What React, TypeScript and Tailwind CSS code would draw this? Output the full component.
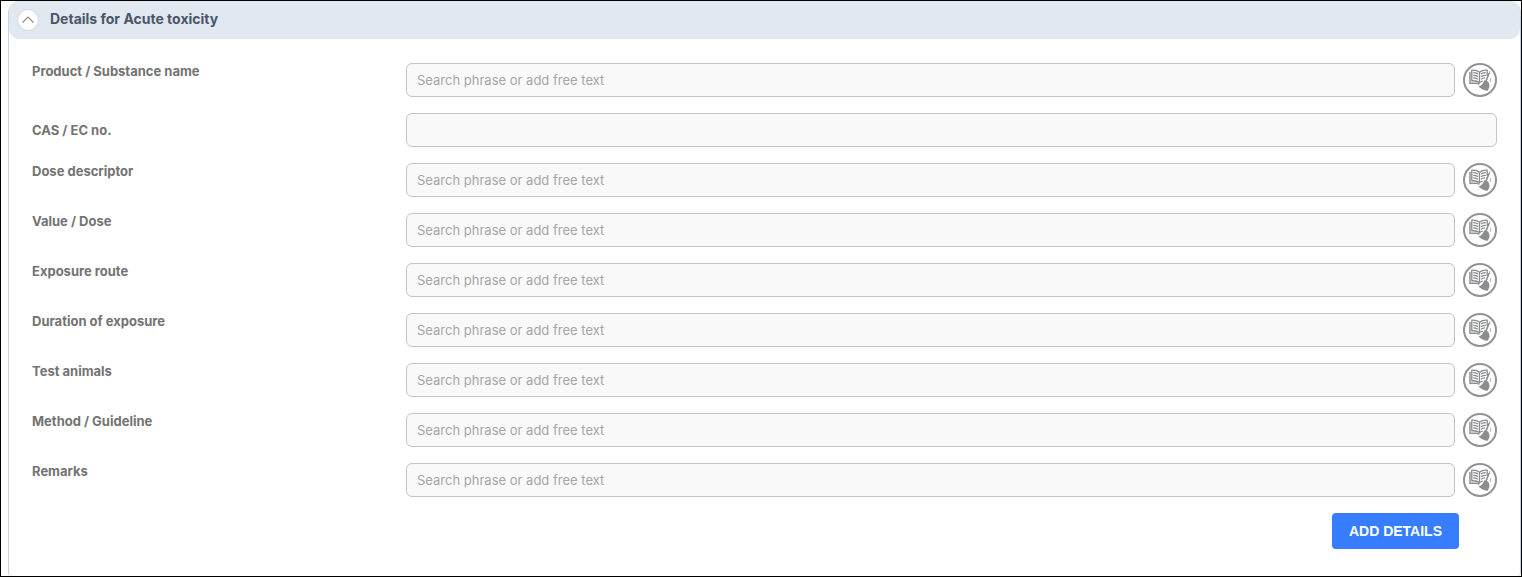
import { useState } from 'react';

type Field = { id: string; label: string; phrase: boolean };

const FIELDS: Field[] = [
  { id: 'product', label: 'Product / Substance name', phrase: true },
  { id: 'cas', label: 'CAS / EC no.', phrase: false },
  { id: 'descriptor', label: 'Dose descriptor', phrase: true },
  { id: 'value', label: 'Value / Dose', phrase: true },
  { id: 'route', label: 'Exposure route', phrase: true },
  { id: 'duration', label: 'Duration of exposure', phrase: true },
  { id: 'animals', label: 'Test animals', phrase: true },
  { id: 'method', label: 'Method / Guideline', phrase: true },
  { id: 'remarks', label: 'Remarks', phrase: true },
];

const INPUT =
  'h-[34px] min-w-0 flex-1 rounded-md border border-[#c4c4c4] bg-[#f9f9f9] px-2.5 text-[13px] text-[#555555] placeholder:text-[#a6a6a6] outline-none focus:border-[#377dff]';

function PhraseBookIcon() {
  return (
    <svg viewBox="0 0 34 34" className="size-[34px]" fill="none" aria-hidden="true">
      <circle cx="17" cy="17" r="16" fill="#ffffff" stroke="#929292" strokeWidth="2" />
      <path d="M7 9v11.2h6.200c1.500 0 2.500.4 3.300 1.200" stroke="#8b929a" strokeWidth="1.500" />
      <path
        d="M16.500 9.300C14.500 7.600 11.800 7 8.800 7.200v10.600c3-.2 5.700.3 7.700 1.800 1-.8 2-1.200 3.200-1.500"
        stroke="#8b8b8b"
        strokeWidth="1.300"
        strokeLinejoin="round"
      />
      <path d="M16.500 9.300c2-1.700 4.600-2.300 7.700-2.100v6M16.500 9.300v10.300" stroke="#8b8b8b" strokeWidth="1.300" strokeLinejoin="round" />
      <path
        d="M10.200 9.700c1.700 0 3.400.5 4.800 1.300M10.200 12.300c1.700 0 3.400.5 4.800 1.300M10.200 14.900c1.700 0 3.400.5 4.800 1.300"
        stroke="#858b91"
        strokeWidth="1.300"
      />
      <path
        d="M18 11c1.400-.8 3-1.300 4.800-1.300M18 13.600c1.400-.8 3-1.300 4.800-1.300M18 16.200c1.400-.8 2.600-1.200 4-1.300"
        stroke="#858b91"
        strokeWidth="1.300"
      />
      <path d="M26.500 8.200l.4 2.400M27.500 15v4" stroke="#a5c1dc" strokeWidth="1.200" />
      <path d="M26 10.500l-3.200 8" stroke="#8b8b8b" strokeWidth="1.600" strokeLinecap="round" />
      <path
        d="M21.300 17.200l3.800 1.200c.9 1.700 1.500 3.500 1.400 5.300l-1.700 4.100c-3.400-.2-6.800-1.700-9.300-4.300 2.700-.8 4.700-2.800 5.800-6.300z"
        fill="#8d8d8d"
      />
    </svg>
  );
}

function FieldRow({ field }: { field: Field }) {
  return (
    <div className="grid grid-cols-[374px_minmax(0,1fr)]">
      <label
        htmlFor={field.id}
        className={
          field.phrase
            ? 'self-start text-[13px] leading-4 font-bold text-[#737373]'
            : 'self-center text-[13px] leading-4 font-bold text-[#737373]'
        }
      >
        {field.label}
      </label>
      <div className="flex gap-2">
        <input
          id={field.id}
          type="text"
          className={INPUT}
          placeholder={field.phrase ? 'Search phrase or add free text' : undefined}
        />
        {field.phrase && (
          <button type="button" aria-label={`Phrases: ${field.label}`} className="shrink-0 cursor-pointer rounded-full">
            <PhraseBookIcon />
          </button>
        )}
      </div>
    </div>
  );
}

export default function App() {
  const [open, setOpen] = useState(true);

  return (
    <div className="min-h-screen border border-black bg-white pl-[7px] font-['Inter',sans-serif]">
      <section className="rounded-t-xl rounded-b border-x border-[#c5d3e2]">
        <header className="flex h-[38px] items-center gap-[11px] rounded-[10px] bg-[#e1e8f0] pl-2">
          <button
            type="button"
            aria-label="Toggle details"
            aria-expanded={open}
            onClick={() => setOpen(!open)}
            className="flex size-[22px] cursor-pointer items-center justify-center rounded-full border border-[#d0d7e0] bg-white"
          >
            <svg viewBox="0 0 14 14" className="size-3.5" fill="none" aria-hidden="true">
              <path d={open ? 'M1.5 9.5L7 4l5.5 5.5' : 'M1.5 4.5L7 10l5.5-5.5'} stroke="#8c8c8c" strokeWidth="1.2" />
            </svg>
          </button>
          <h2 className="pb-0.5 text-sm font-bold text-[#4a5568]">Details for Acute toxicity</h2>
        </header>
        {open && (
          <form className="flex flex-col gap-4 px-[23px] pt-6 pb-[27px]" onSubmit={(e) => e.preventDefault()}>
            {FIELDS.map((field) => (
              <FieldRow key={field.id} field={field} />
            ))}
            <button
              type="submit"
              className="mr-[38px] h-9 cursor-pointer self-end rounded bg-[#377dff] px-[17px] font-['Liberation_Sans',Arial,sans-serif] text-sm font-bold text-white"
            >
              ADD DETAILS
            </button>
          </form>
        )}
      </section>
    </div>
  );
}
